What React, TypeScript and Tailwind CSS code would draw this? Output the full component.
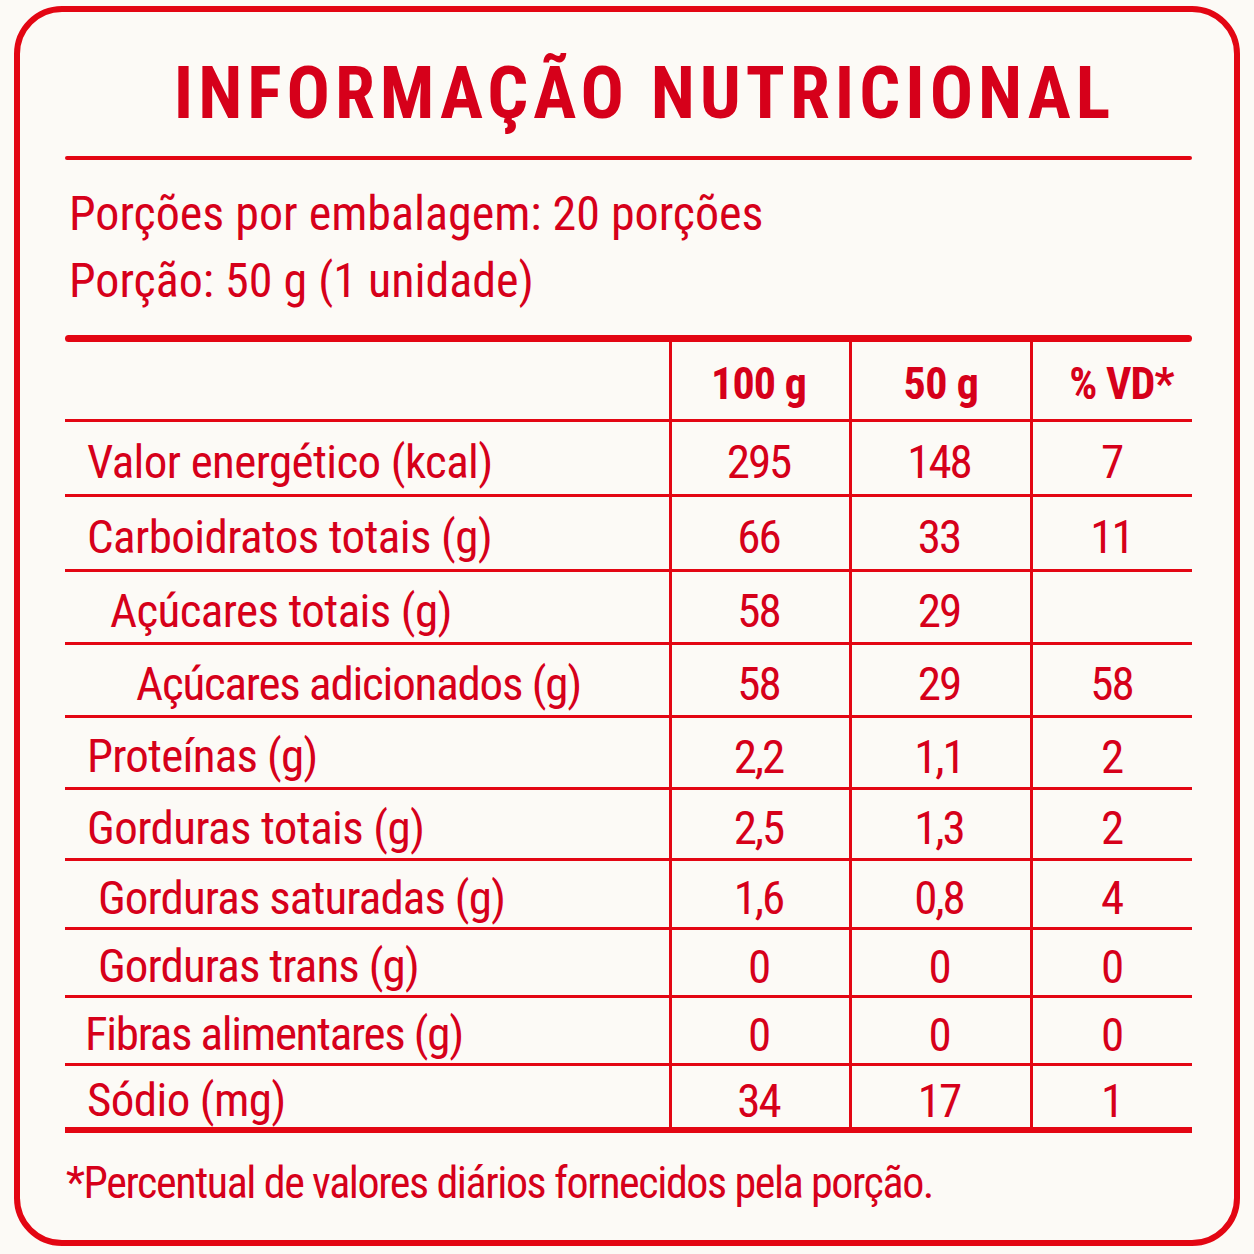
import React from 'react';

type Row = { label: string; indent: string; a: string; b: string; c: string; h: string };

const rows: Row[] = [
  { label: 'Valor energético (kcal)', indent: 'pl-[22px] tracking-[-0.6px]', a: '295', b: '148', c: '7', h: 'h-[75px]' },
  { label: 'Carboidratos totais (g)', indent: 'pl-[22px] tracking-[-0.6px]', a: '66', b: '33', c: '11', h: 'h-[75px]' },
  { label: 'Açúcares totais (g)', indent: 'pl-[45px] tracking-[-0.6px]', a: '58', b: '29', c: '', h: 'h-[73px]' },
  { label: 'Açúcares adicionados (g)', indent: 'pl-[71px] tracking-[-1.2px]', a: '58', b: '29', c: '58', h: 'h-[73px]' },
  { label: 'Proteínas (g)', indent: 'pl-[22px] tracking-[-0.8px]', a: '2,2', b: '1,1', c: '2', h: 'h-[72px]' },
  { label: 'Gorduras totais (g)', indent: 'pl-[22px] tracking-[-0.6px]', a: '2,5', b: '1,3', c: '2', h: 'h-[71px]' },
  { label: 'Gorduras saturadas (g)', indent: 'pl-[33px] tracking-[-0.9px]', a: '1,6', b: '0,8', c: '4', h: 'h-[69px]' },
  { label: 'Gorduras trans (g)', indent: 'pl-[33px] tracking-[-0.9px]', a: '0', b: '0', c: '0', h: 'h-[68px]' },
  { label: 'Fibras alimentares (g)', indent: 'pl-[20px] tracking-[-1.3px]', a: '0', b: '0', c: '0', h: 'h-[68px]' },
  { label: 'Sódio (mg)', indent: 'pl-[22px] tracking-[-0.6px]', a: '34', b: '17', c: '1', h: 'h-[67px]' },
];

export default function App() {
  return (
    <div className="w-[1254px] h-[1254px] bg-[#fcfaf6] pt-[6px] pl-[14px] text-[#d6001a] font-['Roboto_Condensed','Roboto',sans-serif]">
      <div className="w-[1226px] h-[1240px] border-[6px] border-[#e30613] rounded-[48px] pl-[45px] pr-[42px] flex flex-col">
        {/* title */}
        <h1 className="h-[144px] pt-[46px] text-center pl-[32px] text-[72px] leading-none font-bold tracking-[5px] whitespace-nowrap">
          INFORMAÇÃO NUTRICIONAL
        </h1>
        <div className="h-[4px] bg-[#e30613] rounded-full" />

        <div className="h-[175px] pl-[4px] pt-[20px] text-[48px] leading-[67px]">
          <p>Porções por embalagem: 20 porções</p>
          <p>Porção: 50 g (1 unidade)</p>
        </div>
        <div className="h-[7px] bg-[#e30613] rounded-full" />

        {/* table */}
        <div className="flex flex-col">
          <div className="h-[80px] grid grid-cols-[604px_180px_181px_1fr] border-b-[3px] border-[#e30613] font-bold text-[44px] leading-none">
            <div />
            <div className="border-l-[3px] border-[#e30613] flex items-center justify-center pt-[6px] pr-[4px] tracking-[-0.8px]">100 g</div>
            <div className="border-l-[3px] border-[#e30613] flex items-center justify-center pt-[6px] tracking-[-0.5px]">50 g</div>
            <div className="border-l-[3px] border-[#e30613] flex items-center justify-center pt-[6px] pl-[18px] tracking-[-0.8px]">% VD*</div>
          </div>
          {rows.map((r, i) => (
            <div
              key={r.label}
              className={`${r.h} grid grid-cols-[604px_180px_181px_1fr] leading-none ${
                i === rows.length - 1 ? 'border-b-[6px]' : 'border-b-[3px]'
              } border-[#e30613]`}
            >
              <div className={`${r.indent} flex items-center pt-[6px] text-[47px]`}>{r.label}</div>
              <div className="border-l-[3px] border-[#e30613] flex items-center justify-center pt-[7px] pr-[4px] text-[47px] tracking-[-2px]">{r.a}</div>
              <div className="border-l-[3px] border-[#e30613] flex items-center justify-center pt-[7px] pr-[4px] text-[47px] tracking-[-2px]">{r.b}</div>
              <div className="border-l-[3px] border-[#e30613] flex items-center justify-center pt-[7px] pr-[2px] text-[47px] tracking-[-2px]">{r.c}</div>
            </div>
          ))}
        </div>

        <p className="pt-[22px] text-[44px] leading-[56px] pl-[1px] tracking-[-1.4px]">*Percentual de valores diários fornecidos pela porção.</p>
      </div>
    </div>
  );
}
